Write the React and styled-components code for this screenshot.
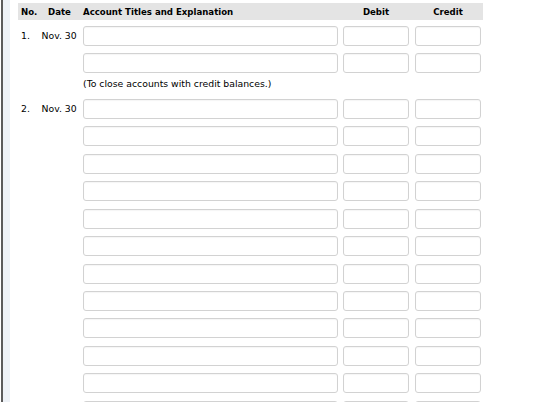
import React from 'react';
import styled, { createGlobalStyle } from 'styled-components';

const GlobalStyle = createGlobalStyle`
  html, body {
    margin: 0;
    padding: 0;
    background: #fff;
  }
  body {
    font-family: "DejaVu Sans", Verdana, sans-serif;
    color: #000;
  }
`;

const Page = styled.div`
  display: flex;
  min-height: 402px;
  padding-left: 1px;
`;

const EdgeRule = styled.div`
  width: 2px;
  background: #5c5c5c;
  flex-shrink: 0;
`;

const EdgeStrip = styled.div`
  width: 7px;
  background: #eef2f7;
  flex-shrink: 0;
`;

const Sheet = styled.div`
  padding: 3px 0 0 8px;
`;

const COLUMNS = '22px 43px 260px 72px 68px';

const HeaderRow = styled.div`
  display: grid;
  grid-template-columns: ${COLUMNS};
  width: 465px;
  height: 17px;
  align-items: center;
  background: #e4e4e4;
  font-size: 8.6px;
  font-weight: bold;
  margin-bottom: 2px;
`;

const HeadCell = styled.div`
  padding-left: ${props => props.$pad || 0}px;
  text-align: ${props => (props.$center ? 'center' : 'left')};
  padding-right: ${props => (props.$center ? props.$right || 0 : 0)}px;
  white-space: nowrap;
`;

const Row = styled.div`
  display: grid;
  grid-template-columns: ${COLUMNS};
  height: 27.45px;
  align-items: center;
  font-size: 9.3px;
`;

const Label = styled.div`
  padding-left: ${props => props.$pad || 0}px;
  white-space: nowrap;
`;

const Field = styled.input`
  box-sizing: border-box;
  width: ${props => props.$w}px;
  height: 20px;
  margin: 0;
  padding: 0 4px;
  border: 1px solid #d2d2d2;
  border-radius: 3px;
  background: #fff;
  box-shadow: inset 0 1px 1px rgba(0, 0, 0, 0.04);
  font: inherit;
  outline: none;
`;

const Explanation = styled.div`
  height: 18.4px;
  line-height: 13px;
  padding-left: 65px;
  font-size: 9.3px;
  white-space: nowrap;
`;

const entries = [
  { no: '1.', date: 'Nov. 30', lines: 2, note: '(To close accounts with credit balances.)' },
  { no: '2.', date: 'Nov. 30', lines: 12 }
];

function EntryLine({ no, date }) {
  return (
    <Row>
      <Label $pad={3}>{no}</Label>
      <Label $pad={1.5}>{date}</Label>
      <div>
        <Field $w={255} />
      </div>
      <div>
        <Field $w={66} />
      </div>
      <div>
        <Field $w={66} />
      </div>
    </Row>
  );
}

export default function App() {
  return (
    <>
      <GlobalStyle />
      <Page>
        <EdgeRule />
        <EdgeStrip />
        <Sheet>
          <HeaderRow>
            <HeadCell $pad={3}>No.</HeadCell>
            <HeadCell $pad={8}>Date</HeadCell>
            <HeadCell>Account Titles and Explanation</HeadCell>
            <HeadCell $center $right={6}>Debit</HeadCell>
            <HeadCell $center $right={2}>Credit</HeadCell>
          </HeaderRow>
          {entries.map(entry => (
            <React.Fragment key={entry.no}>
              {Array.from({ length: entry.lines }).map((_, i) => (
                <EntryLine
                  key={i}
                  no={i === 0 ? entry.no : ''}
                  date={i === 0 ? entry.date : ''}
                />
              ))}
              {entry.note && <Explanation>{entry.note}</Explanation>}
            </React.Fragment>
          ))}
        </Sheet>
      </Page>
    </>
  );
}
